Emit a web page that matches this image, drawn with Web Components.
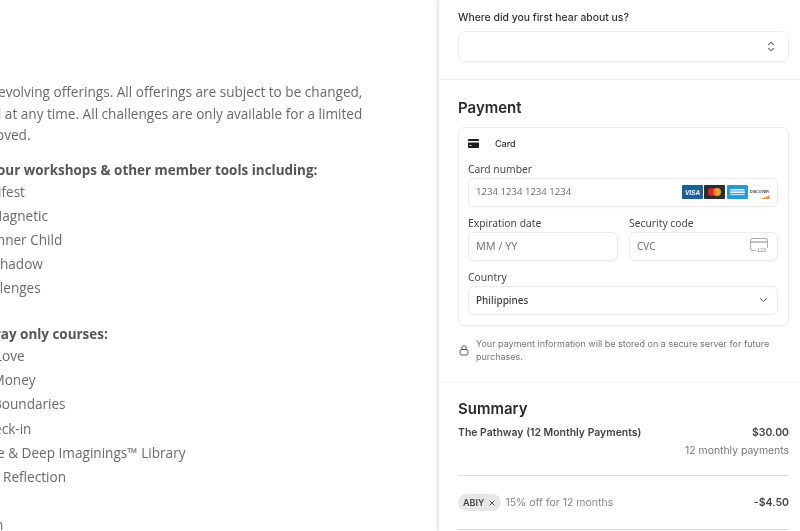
<!DOCTYPE html>
<html lang="en">
<head>
<meta charset="utf-8">
<title>Checkout</title>
<style>
html, body { margin: 0; height: 100%; overflow: hidden; background: #fff; }
</style>
</head>
<body>
<checkout-page>
  <offer-pane slot="left"></offer-pane>
  <div slot="right">
    <hear-section></hear-section>
    <payment-section></payment-section>
    <summary-section></summary-section>
  </div>
</checkout-page>

<script>
class CheckoutPage extends HTMLElement {
    constructor() {
        super();
        this.attachShadow({mode: 'open'}).innerHTML = `
            <style>
                :host { display: grid; grid-template-columns: 439px 361px; width: 800px; height: 531px; overflow: hidden; font-family: Inter, "Liberation Sans", sans-serif; filter: blur(.3px); }
                .right { box-shadow: -2px 0 3px rgba(0,0,0,.11); background: #fff; overflow: hidden; padding: 0 11px 0 19px; }
                .left { overflow: hidden; }
            </style>
            <div class="left"><slot name="left"></slot></div>
            <div class="right"><slot name="right"></slot></div>
        `;
    }
}

class OfferPane extends HTMLElement {
    constructor() {
        super();
        this.attachShadow({mode: 'open'}).innerHTML = `
            <style>
                :host { display: block; font: 13.6px/21.5px "Open Sans", sans-serif; color: #6b6b6b; padding-top: 81px; white-space: nowrap; }
                p { margin: 0; }
                .intro { margin-bottom: 15.5px; }
                b { display: block; color: #555; font-weight: 700; font-size: 13.45px; line-height: 18.5px; }
                ul { list-style: none; margin: 0 0 25px; padding: 0; }
                li { height: 24.2px; line-height: 24.2px; }
                .cut { display: block; }
            </style>
            <p class="intro">
                <span class="cut" style="margin-left:-2px">evolving offerings. All offerings are subject to be changed,</span>
                <span class="cut" style="margin-left:-7px">d at any time. All challenges are only available for a limited</span>
                <span class="cut" style="margin-left:-4px">oved.</span>
            </p>
            <b style="margin-left:-3px">our workshops &amp; other member tools including:</b>
            <ul>
                <li style="margin-left:-2px">ifest</li>
                <li style="margin-left:-10px">Magnetic</li>
                <li style="margin-left:-7px">Inner Child</li>
                <li style="margin-left:-7.5px">Shadow</li>
                <li style="margin-left:-3.6px">llenges</li>
            </ul>
            <b style="margin-left:-5.3px">ray only courses:</b>
            <ul>
                <li style="margin-left:-5px">Love</li>
                <li style="margin-left:-7.6px">Money</li>
                <li style="margin-left:-7px">Boundaries</li>
                <li style="margin-left:-6px">eck-in</li>
                <li style="margin-left:-3px">e &amp; Deep Imaginings™ Library</li>
                <li style="margin-left:3px">Reflection</li>
                <li></li>
                <li style="margin-left:-5px">n</li>
            </ul>
        `;
    }
}

class FieldBox extends HTMLElement {
    constructor() {
        super();
        this.attachShadow({mode: 'open'}).innerHTML = `
            <style>
                :host { display: flex; align-items: center; justify-content: space-between; box-sizing: border-box; height: 29px; padding: 0 7px 2px 7px; border: 1px solid #ebebeb; border-radius: 6px; box-shadow: 0 1px 2px rgba(0,0,0,.03); font: 10px "Noto Sans", sans-serif; color: #777; background: #fff; }
                :host([strong]) { color: #3e3e3e; font-weight: 500; }
            </style>
            <span><slot></slot></span><slot name="end"></slot>
        `;
    }
}

class FormField extends HTMLElement {
    constructor() {
        super();
        this.attachShadow({mode: 'open'}).innerHTML = `
            <style>
                :host { display: block; min-width: 0; }
                label { display: block; font: 10.3px/12px "Noto Sans", sans-serif; color: #4a4a4a; margin-bottom: 3px; }
            </style>
            <label>${this.getAttribute('label')}</label>
            <slot></slot>
        `;
    }
}

class HearSection extends HTMLElement {
    constructor() {
        super();
        this.attachShadow({mode: 'open'}).innerHTML = `
            <style>
                :host { display: block; padding: 11px 11px 17px 19px; margin: 0 -11px 0 -19px; border-bottom: 1px solid #f0f0f0; }
                label { display: block; font-size: 10.4px; line-height: 13px; font-weight: 500; color: #333; margin-bottom: 7px; }
                .select { display: flex; align-items: center; justify-content: flex-end; box-sizing: border-box; height: 31px; padding-right: 13px; border: 1px solid #ededed; border-radius: 7px; box-shadow: 0 1px 2px rgba(0,0,0,.03); }
            </style>
            <label>Where did you first hear about us?</label>
            <div class="select">
                <svg width="8" height="11" viewBox="0 0 8 11" fill="none" stroke="#666" stroke-width="1.1"><path d="M1.2 3.8 4 1.2l2.8 2.6M1.2 7.2 4 9.8l2.8-2.6"/></svg>
            </div>
        `;
    }
}

class BrandIcons extends HTMLElement {
    constructor() {
        super();
        this.attachShadow({mode: 'open'}).innerHTML = `
            <style>
                :host { display: flex; gap: 1.5px; }
                svg { display: block; }
                text { font-family: "Liberation Sans", sans-serif; font-weight: 700; }
            </style>
            <svg width="21" height="14" viewBox="0 0 21 14"><rect width="21" height="14" rx="1" fill="#1a5f9e"/><text x="10.5" y="9.6" font-size="6.5" fill="#fff" text-anchor="middle" font-style="italic">VISA</text></svg>
            <svg width="21" height="14" viewBox="0 0 21 14"><rect width="21" height="14" rx="1" fill="#2d2d2d"/><circle cx="8" cy="7" r="4" fill="#d9232e"/><circle cx="13" cy="7" r="4" fill="#f1a02c"/><path d="M10.5 3.9a4 4 0 0 1 0 6.2a4 4 0 0 1 0-6.2z" fill="#ef6a20"/></svg>
            <svg width="21" height="14" viewBox="0 0 21 14"><rect width="21" height="14" rx="1" fill="#2a9ad6"/><rect x="3.5" y="4" width="14" height="1.6" fill="#cfe9f7"/><rect x="3" y="6.4" width="15" height="1.6" fill="#e4f3fb"/><rect x="3.5" y="8.8" width="14" height="1.4" fill="#b9dff3"/></svg>
            <svg width="21" height="14" viewBox="0 0 21 14"><rect x=".25" y=".25" width="20.5" height="13.5" rx="1" fill="#fff" stroke="#e8e8e8" stroke-width=".5"/><text x="10.5" y="7.6" font-size="3.6" fill="#444" text-anchor="middle">DISCOVER</text><path d="M10 14c4-.5 8-2 10.7-4v3a1 1 0 0 1-1 1z" fill="#ee8f3a"/></svg>
        `;
    }
}

class PaymentSection extends HTMLElement {
    constructor() {
        super();
        this.attachShadow({mode: 'open'}).innerHTML = `
            <style>
                :host { display: block; box-sizing: border-box; height: 303px; padding: 19px 11px 0 19px; margin: 0 -11px 0 -19px; border-bottom: 1px solid #f6f6f6; }
                h2 { margin: 0 0 10px; font-size: 15px; line-height: 18px; font-weight: 600; color: #2b2b2b; }
                .card { box-sizing: border-box; height: 199px; padding: 9px 10px 0 9px; border: 1px solid #ececec; border-radius: 6px; box-shadow: 0 1px 2px rgba(0,0,0,.03); display: flex; flex-direction: column; gap: 10px; }
                .head { display: flex; align-items: center; gap: 16px; font-size: 9px; font-weight: 500; color: #333; height: 13px; margin-bottom: 3px; }
                .two { display: grid; grid-template-columns: 150px 149px; gap: 11px; }
                .note { display: flex; align-items: center; gap: 7px; margin-top: 11px; font-size: 9px; line-height: 13px; color: #777; padding-left: 1px; }
                svg { display: block; flex: none; }
            </style>
            <h2>Payment</h2>
            <div class="card">
                <div class="head">
                    <svg width="11" height="9" viewBox="0 0 11 9"><path d="M1 0h9a1 1 0 0 1 1 1v1H0V1a1 1 0 0 1 1-1zM0 3.5h11V8a1 1 0 0 1-1 1H1a1 1 0 0 1-1-1z" fill="#1d1d1d"/><rect x="1.5" y="6" width="2" height="1" fill="#fff"/></svg>
                    <span>Card</span>
                </div>
                <form-field label="Card number">
                    <field-box style="font-size:9.6px">1234 1234 1234 1234<brand-icons slot="end"></brand-icons></field-box>
                </form-field>
                <div class="two">
                    <form-field label="Expiration date"><field-box style="font-size:10.8px">MM / YY</field-box></form-field>
                    <form-field label="Security code">
                        <field-box>CVC
                            <svg slot="end" width="20" height="15" viewBox="0 0 20 15" fill="none" stroke="#999" stroke-width=".8" style="margin-right:1px"><path d="M18.5 10V2A1.5 1.5 0 0 0 17 .5H3A1.500 1.500 0 0 0 1.5 2v9A1.5 1.5 0 0 0 3 12.500h4"/><path d="M1.5 4h17" stroke-width="1.2"/><text x="8" y="14" font-size="5.5" fill="#888" stroke="none" font-family="Liberation Sans, sans-serif">123</text></svg>
                        </field-box>
                    </form-field>
                </div>
                <form-field label="Country">
                    <field-box strong>Philippines
                        <svg slot="end" width="9" height="6" viewBox="0 0 9 6" fill="none" stroke="#666" stroke-width="1" style="margin-right:2px"><path d="m1 1 3.5 3.5L8 1"/></svg>
                    </field-box>
                </form-field>
            </div>
            <div class="note">
                <svg width="10" height="11" viewBox="0 0 10 11" fill="none" stroke="#555" stroke-width="1"><rect x="1" y="4.5" width="8" height="5.5" rx="1.8"/><path d="M2.8 4.5V3a2.2 2.2 0 0 1 4.400 0v1.500"/></svg>
                <span>Your payment information will be stored on a secure server for future purchases.</span>
            </div>
        `;
    }
}

class SummarySection extends HTMLElement {
    constructor() {
        super();
        this.attachShadow({mode: 'open'}).innerHTML = `
            <style>
                :host { display: block; padding-top: 17px; }
                h2 { margin: 0 0 8px; font-size: 15px; line-height: 18px; font-weight: 600; color: #2b2b2b; }
                .row { display: flex; justify-content: space-between; align-items: center; font-size: 10.45px; line-height: 13px; font-weight: 600; color: #444; }
                .sub { text-align: right; font-size: 10.4px; line-height: 13px; color: #777; margin-top: 5px; padding-bottom: 18px; border-bottom: 1px solid #ddd; }
                .promo { height: 54px; box-sizing: border-box; border-bottom: 1px solid #ddd; }
                .left { display: flex; align-items: center; gap: 4px; font-weight: 400; color: #888; font-size: 10.5px; }
                .chip { display: inline-flex; align-items: center; gap: 5px; height: 17px; padding: 0 6px 0 5px; border-radius: 9px; background: #e6e6e6; color: #444; font-size: 9px; font-weight: 600; }
                .amount { font-size: 10.5px; }
            </style>
            <h2>Summary</h2>
            <div class="row"><span>The Pathway (12 Monthly Payments)</span><span class="amount">$30.00</span></div>
            <div class="sub">12 monthly payments</div>
            <div class="row promo">
                <span class="left">
                    <span class="chip">ABIY
                        <svg width="6" height="6" viewBox="0 0 6 6" stroke="#444" stroke-width=".9"><path d="m.6.6 4.8 4.8M5.4.6.6 5.4"/></svg>
                    </span>
                    15% off for 12 months
                </span>
                <span class="amount">-$4.50</span>
            </div>
        `;
    }
}

window.customElements.define('checkout-page', CheckoutPage);
window.customElements.define('offer-pane', OfferPane);
window.customElements.define('field-box', FieldBox);
window.customElements.define('form-field', FormField);
window.customElements.define('hear-section', HearSection);
window.customElements.define('brand-icons', BrandIcons);
window.customElements.define('payment-section', PaymentSection);
window.customElements.define('summary-section', SummarySection);
</script>
</body>
</html>
